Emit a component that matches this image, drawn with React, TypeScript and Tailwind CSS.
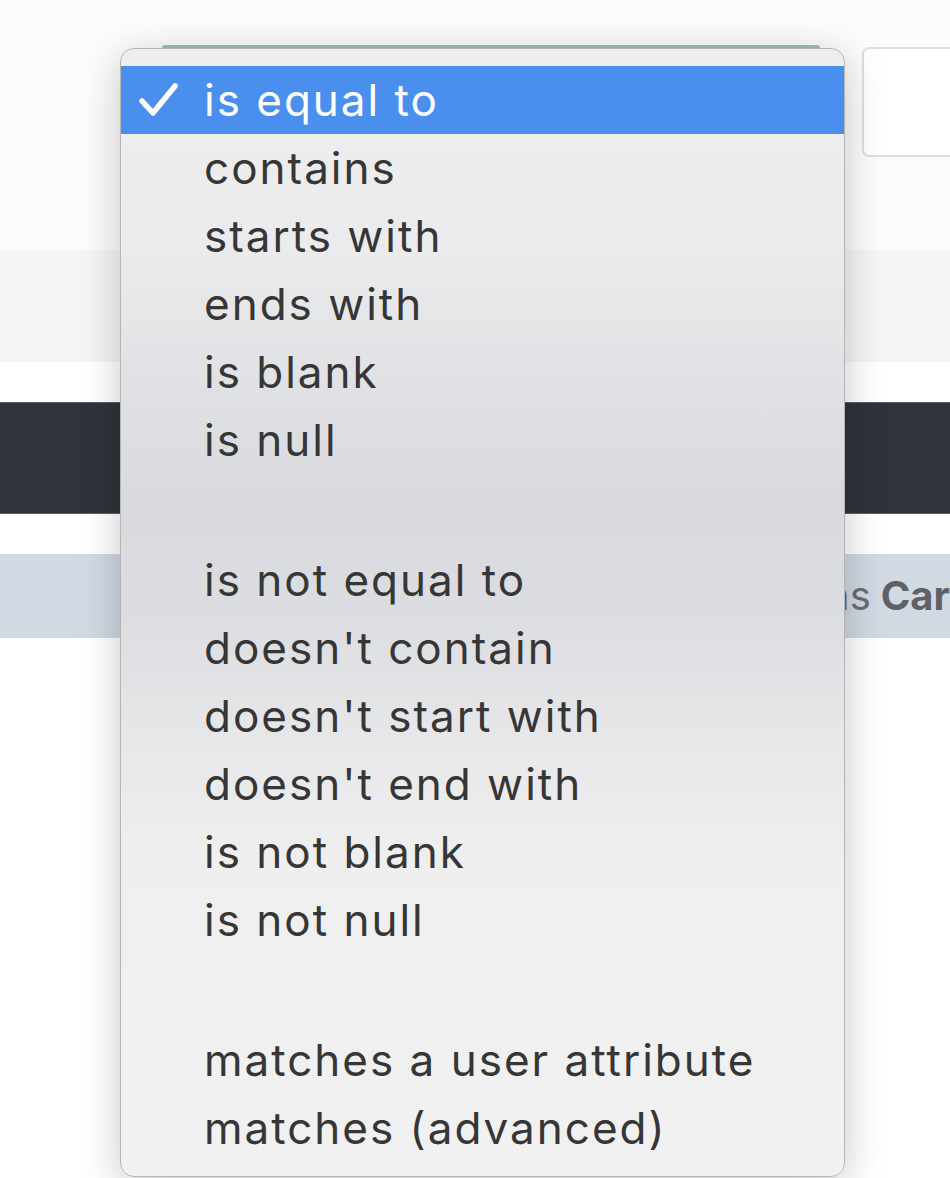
import React from "react";

const groups: string[][] = [
  ["is equal to", "contains", "starts with", "ends with", "is blank", "is null"],
  ["is not equal to", "doesn't contain", "doesn't start with", "doesn't end with", "is not blank", "is not null"],
  ["matches a user attribute", "matches (advanced)"],
];

function Check() {
  return (
    <svg width="44" height="40" viewBox="0 0 44 40" className="shrink-0">
      <path d="M6 21 L17 33 L39 6" fill="none" stroke="#ffffff" strokeWidth="5.5" strokeLinecap="round" strokeLinejoin="round" />
    </svg>
  );
}

export default function App() {
  return (
    <div className="relative w-[950px] h-[1178px] overflow-hidden bg-white" style={{ fontFamily: "Inter, 'Noto Sans', sans-serif" }}>
      {/* background page */}
      <div className="flex flex-col">
        <div className="h-[250px] bg-[#fcfcfc] pt-[47px] pl-[862px]">
          <div className="w-[130px] h-[110px] rounded-[7px] border-2 border-[#dedede] bg-white" />
        </div>
        <div className="h-[112px] bg-[#f5f5f5]" />
        <div className="h-[40px] bg-white" />
        <div className="h-[112px] bg-[#30333b] border-y border-[#5a5d63]" />
        <div className="h-[40px] bg-white" />
        <div className="h-[84px] bg-[#d1d9e3] flex items-center pl-[826px] text-[40px] whitespace-nowrap overflow-hidden">
          <span className="text-[#6a6d72]">ns </span>
          <span className="font-bold text-[#5f6166] ml-[10px]">Car</span>
        </div>
        <div className="flex-1 bg-white" />
      </div>

      {/* select top border peeking behind the menu */}
      <div className="absolute left-[162px] top-[45px] w-[658px] h-[3px] bg-[#9fbcbd] rounded-t-sm" />

      {/* popup menu */}
      <div className="absolute left-[120px] top-[48px] w-[725px] h-[1129px] rounded-[14px] border border-[#b5b5b5] shadow-[0_8px_40px_rgba(0,0,0,0.22)] overflow-hidden bg-[linear-gradient(to_bottom,#efefef_0%,#ebebed_18%,#e0e1e4_30%,#d9dadf_40%,#dcdde1_50%,#e8e8ea_62%,#efefef_72%,#f1f1f1_100%)] pt-[17px]">
        {groups.map((g, gi) => (
          <div key={gi} className={gi > 0 ? "pt-[72px]" : ""}>
            {g.map((item) => {
              const selected = item === "is equal to";
              return (
                <div
                  key={item}
                  className={
                    "h-[68px] flex items-center text-[44px] leading-none tracking-[2px] " +
                    (selected ? "bg-[#4a8fed] text-white" : "text-[#363636]")
                  }
                >
                  <div className="w-[83px] flex justify-start pl-[15px]">{selected ? <Check /> : null}</div>
                  <span className="-mt-[1px]">{item}</span>
                </div>
              );
            })}
          </div>
        ))}
      </div>
    </div>
  );
}
